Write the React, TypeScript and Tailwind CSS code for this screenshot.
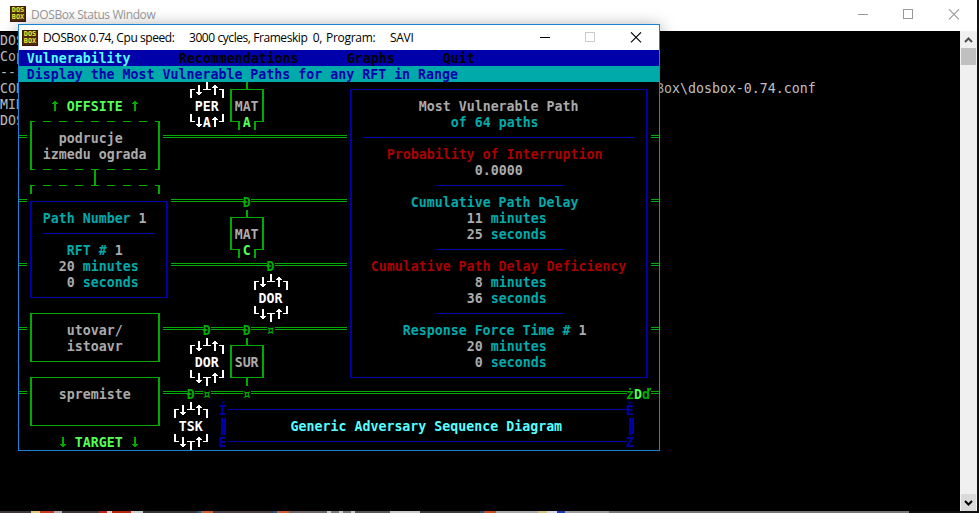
import React from "react";

const mono = "font-['DejaVu_Sans_Mono','Liberation_Mono',monospace]";
const cell = `${mono} text-[13.289px] leading-4 whitespace-pre`;

const GREEN = "#00aa00";
const BLUE = "#0000aa";

// The text screen has 8x16 cells; the diagram starts at text row 2.
const CW = 8;
const CH = 16;

function DosIcon() {
  return (
    <div className="flex h-4 w-4 shrink-0 flex-col items-center justify-center overflow-hidden border border-[#3a1c08] bg-[#4d2a10] font-['DejaVu_Sans_Mono',monospace] text-[6.8px] leading-[7px] font-bold text-[#ffe92e]">
      <span>DOS</span>
      <span>BOX</span>
    </div>
  );
}

function WindowButtons({ color, maxColor }: { color: string; maxColor: string }) {
  return (
    <svg width="102" height="11" viewBox="0 0 102 11" fill="none" className="shrink-0">
      <path d="M0 5.5H10" stroke={color} shapeRendering="crispEdges" />
      <rect x="45.5" y="0.5" width="9" height="9" stroke={maxColor} shapeRendering="crispEdges" />
      <path d="M91 0.3L101 10.3M101 0.3L91 10.3" stroke={color} strokeWidth="1.1" />
    </svg>
  );
}

function Rect({ x, y, w, h }: { x: number; y: number; w: number; h: number }) {
  return <rect x={x} y={y} width={w} height={h} />;
}

function Arrow({ c, r, up }: { c: number; r: number; up?: boolean }) {
  const x = 19 + c * CW;
  const y = 50 + r * CH + 3;
  return (
    <g>
      <Rect x={x + 3} y={y} w={2} h={10} />
      <Rect x={x + 2} y={up ? y + 1 : y + 8} w={4} h={1} />
      <Rect x={x + 1} y={up ? y + 2 : y + 7} w={6} h={1} />
    </g>
  );
}

function Gate({ c, r, letter }: { c: number; r: number; letter?: boolean }) {
  const x = 19 + c * CW;
  const y = 50 + r * CH;
  return (
    <g fill="#ffffff">
      <Rect x={x + 3} y={y + 7} w={5} h={1} />
      <Rect x={x + 3} y={y + 7} w={2} h={9} />
      <Arrow c={c + 1} r={r} />
      <Rect x={x + 16} y={y + 7} w={8} h={1} />
      <Rect x={x + 19} y={y} w={2} h={8} />
      <Arrow c={c + 3} r={r} up />
      <Rect x={x + 32} y={y + 7} w={5} h={1} />
      <Rect x={x + 35} y={y + 7} w={2} h={9} />
      <Rect x={x + 3} y={y + 39} w={5} h={1} />
      <Rect x={x + 3} y={y + 32} w={2} h={8} />
      <Arrow c={c + 1} r={r + 2} />
      {!letter && <Rect x={x + 16} y={y + 39} w={8} h={1} />}
      {!letter && <Rect x={x + 19} y={y + 39} w={2} h={9} />}
      <Arrow c={c + 3} r={r + 2} up />
      <Rect x={x + 32} y={y + 39} w={5} h={1} />
      <Rect x={x + 35} y={y + 32} w={2} h={8} />
    </g>
  );
}

function Block({ y, open }: { y: number; open?: boolean }) {
  return (
    <g>
      <Rect x={246} y={y} w={2} h={7} />
      <Rect x={230} y={y + 7} w={34} h={1} />
      <Rect x={230} y={y + 7} w={2} h={33} />
      <Rect x={262} y={y + 7} w={2} h={33} />
      {open ? (
        <>
          <Rect x={230} y={y + 39} w={10} h={1} />
          <Rect x={238} y={y + 39} w={2} h={9} />
          <Rect x={254} y={y + 39} w={10} h={1} />
          <Rect x={254} y={y + 39} w={2} h={9} />
        </>
      ) : (
        <>
          <Rect x={230} y={y + 39} w={34} h={1} />
          <Rect x={246} y={y + 39} w={2} h={9} />
        </>
      )}
    </g>
  );
}

// Double rules between the protection layers: [y, from, to]
const doubles = [
  [135, 19, 27], [135, 163, 347], [135, 651, 659],
  [199, 19, 27], [199, 171, 243], [199, 251, 347], [199, 651, 659],
  [263, 19, 27], [263, 171, 267], [263, 275, 347], [263, 651, 659],
  [327, 19, 27], [327, 163, 203], [327, 211, 243], [327, 251, 267], [327, 275, 347], [327, 651, 659],
  [391, 19, 27], [391, 163, 187], [391, 195, 203], [391, 211, 243], [391, 251, 627], [391, 651, 659],
];

function Wiring() {
  return (
    <svg className="absolute inset-0" width="640" height="368" viewBox="19 82 640 368" shapeRendering="crispEdges">
      <g fill={GREEN}>
        {doubles.map(([y, a, b]) => (
          <g key={`${y}-${a}`}>
            <Rect x={a} y={y} w={b - a} h={1} />
            <Rect x={a} y={y + 2} w={b - a} h={1} />
          </g>
        ))}
        <Block y={82} open />
        <Block y={210} open />
        <Block y={338} />
        {[121, 169, 185].map((y) => (
          <g key={y}>
            <Rect x={30} y={y} w={5} h={1} />
            {[43, 59, 75, 91, 107, 123, 139].map((x) => (
              <Rect key={x} x={x} y={y} w={8} h={1} />
            ))}
            <Rect x={155} y={y} w={5} h={1} />
          </g>
        ))}
        <Rect x={30} y={121} w={2} h={49} />
        <Rect x={158} y={121} w={2} h={49} />
        <Rect x={30} y={185} w={2} h={9} />
        <Rect x={158} y={185} w={2} h={9} />
        <Rect x={94} y={169} w={2} h={17} />
        <Arrow c={4} r={3} up />
        <Arrow c={14} r={3} up />
        <Arrow c={5} r={24} />
        <Arrow c={14} r={24} />
      </g>
      <Gate c={21} r={2} letter />
      <Gate c={29} r={14} />
      <Gate c={21} r={18} />
      <Gate c={19} r={22} />
      <g fill={BLUE}>
        <Rect x={227} y={409} w={400} h={1} />
        <Rect x={227} y={441} w={400} h={1} />
        <Rect x={221} y={418} w={2} h={16} />
        <Rect x={224} y={418} w={2} h={16} />
        <Rect x={629} y={418} w={2} h={16} />
        <Rect x={632} y={418} w={2} h={16} />
      </g>
    </svg>
  );
}

function Measure({ n, unit }: { n: string; unit: string }) {
  return (
    <div className="text-[#00aaaa]">
      <span className="text-[#aaaaaa]">{n.padStart(2)}</span> {unit}
    </div>
  );
}

function Rule({ className }: { className: string }) {
  return (
    <div className="flex h-4 pt-[6px]">
      <div className={`h-px bg-[#0000aa] ${className}`} />
    </div>
  );
}

function ResultPanel() {
  return (
    <div className="mt-[6px] h-[289px] w-[298px] shrink-0 border-x-2 border-y border-[#0000aa] pt-[9px]">
      <div className="pl-[67px] text-[#aaaaaa]">Most Vulnerable Path</div>
      <div className="pl-[99px] text-[#00aaaa]">of 64 paths</div>
      <Rule className="ml-[11px] w-[272px]" />
      <div className="pl-[35px] text-[#aa0000]">Probability of Interruption</div>
      <div className="pl-[123px] text-[#aaaaaa]">0.0000</div>
      <Rule className="ml-[83px] w-32" />
      <div className="pl-[59px] text-[#00aaaa]">Cumulative Path Delay</div>
      <div className="pl-[115px]">
        <Measure n="11" unit="minutes" />
        <Measure n="25" unit="seconds" />
      </div>
      <Rule className="ml-[83px] w-32" />
      <div className="pl-[19px] text-[#aa0000]">Cumulative Path Delay Deficiency</div>
      <div className="pl-[115px]">
        <Measure n="8" unit="minutes" />
        <Measure n="36" unit="seconds" />
      </div>
      <Rule className="ml-[83px] w-32" />
      <div className="pl-[51px] text-[#00aaaa]">
        Response Force Time # <span className="text-[#aaaaaa]">1</span>
      </div>
      <div className="pl-[115px]">
        <Measure n="20" unit="minutes" />
        <Measure n="0" unit="seconds" />
      </div>
    </div>
  );
}

function PathPanel() {
  return (
    <div className="h-[97px] w-[138px] shrink-0 border-x-2 border-y border-[#0000aa] pt-[9px] pl-[11px] text-[#00aaaa]">
      <div>
        Path Number <span className="text-[#aaaaaa]">1</span>
      </div>
      <Rule className="w-28" />
      <div className="pl-6">
        RFT # <span className="text-[#aaaaaa]">1</span>
      </div>
      <div className="pl-4">
        <Measure n="20" unit="minutes" />
        <Measure n="0" unit="seconds" />
      </div>
    </div>
  );
}

function AreaBox({ className, children }: { className: string; children: React.ReactNode }) {
  return (
    <div className={`h-[49px] w-[130px] shrink-0 border-x-2 border-y border-[#00aa00] pt-[9px] text-[#aaaaaa] ${className}`}>
      {children}
    </div>
  );
}

// A text row is a list of runs: blank cells before it, the text, its colour.
type Run = [number, string, string];

const green = "text-[#00aa00]";
const lime = "text-[#55ff55]";
const gray = "text-[#aaaaaa]";
const blue = "text-[#0000aa]";
const white = "text-white";
const aqua = "text-[#55ffff]";

const layerRows: Run[][] = [
  [],
  [[3, "PER", white], [2, "MAT", gray]],
  [[4, "A", white], [4, "A", lime]],
  [],
  [],
  [],
  [],
  [[9, "Đ", green]],
  [],
  [[8, "MAT", gray]],
  [[9, "C", lime]],
  [[12, "Đ", green]],
  [],
  [[11, "DOR", white]],
  [],
  [[4, "Đ", green], [4, "Đ", green], [2, "¤", green]],
  [],
  [[3, "DOR", white], [2, "SUR", gray]],
  [],
];

const footerRows: Run[][] = [
  [[2, "Đ", green], [1, "¤", green], [4, "¤", green], [47, "ż", green], [0, "D", lime], [0, "ď", green]],
  [[6, "Í", blue], [50, "Ě", blue]],
  [[1, "TSK", white], [11, "Generic Adversary Sequence Diagram", aqua]],
  [[6, "Ë", blue], [50, "Ż", blue]],
];

function TextRows({ rows }: { rows: Run[][] }) {
  return (
    <>
      {rows.map((runs, i) => (
        <div key={i} className="h-4">
          {runs.map(([gap, text, color], j) => (
            <span key={j} className={color}>
              {" ".repeat(gap) + text}
            </span>
          ))}
        </div>
      ))}
    </>
  );
}

function Diagram() {
  return (
    <div className="relative flex h-[368px] overflow-hidden bg-black font-bold">
      <Wiring />
      <div className="flex w-[152px] shrink-0 flex-col pl-[11px]">
        <div className="h-[119px] shrink-0 pt-[17px]">
          <div className="pl-[37px] text-[#55ff55]">OFFSITE</div>
          <div className="pt-4 pl-[29px] text-[#aaaaaa]">podrucje</div>
          <div className="pl-[13px] text-[#aaaaaa]">izmedu ograda</div>
        </div>
        <PathPanel />
        <AreaBox className="mt-[15px] pl-[35px]">
          <div>utovar/</div>
          <div>istoavr</div>
        </AreaBox>
        <AreaBox className="mt-[15px] pl-[27px]">spremiste</AreaBox>
        <div className="mt-[9px] pl-[45px] text-[#55ff55]">TARGET</div>
      </div>
      <div className="flex flex-1 flex-col pt-px">
        <div className="flex h-[304px] shrink-0">
          <div className="w-[179px] shrink-0">
            <TextRows rows={layerRows} />
          </div>
          <ResultPanel />
        </div>
        <TextRows rows={footerRows} />
      </div>
    </div>
  );
}

function DosWindow() {
  return (
    <div className="absolute top-6 left-[18px] flex h-[427px] w-[642px] flex-col border border-[#1883d7] bg-white shadow-[0_3px_16px_rgba(0,0,0,0.4)]">
      <div className="flex h-[25px] shrink-0 items-center pr-[17px] pl-[3px]">
        <DosIcon />
        <div className="ml-[5px] flex flex-1 font-['Open_Sans','Noto_Sans',sans-serif] text-[12px] leading-4 tracking-[-0.43px] whitespace-pre text-black">
          <span className="w-[146px] shrink-0">DOSBox 0.74, Cpu speed:</span>
          <span className="w-[137px] shrink-0">3000 cycles, Frameskip  0,</span>
          <span className="w-[64px] shrink-0 tracking-[-0.3px]">Program:</span>
          <span className="tracking-[-0.3px]">SAVI</span>
        </div>
        <WindowButtons color="#000000" maxColor="#cccccc" />
      </div>
      <div className={`${cell} h-[400px] overflow-hidden indent-[-0.25px]`}>
        <div className="flex h-4 bg-[#0000aa] pl-2 leading-[18px] font-bold text-black">
          <span className="w-[152px] text-[#55ffff]">Vulnerability</span>
          <span className="w-[168px]">Recommendations</span>
          <span className="w-24">Graphs</span>
          <span>Quit</span>
        </div>
        <div className="h-4 bg-[#00aaaa] pl-2 leading-[18px] font-bold text-[#0000aa]">
          Display the Most Vulnerable Paths for any RFT in Range
        </div>
        <Diagram />
      </div>
    </div>
  );
}

function Scrollbar() {
  return (
    <div className="flex w-[17px] shrink-0 flex-col items-center bg-[#f0f0f0]">
      <div className="flex h-[17px] items-center justify-center">
        <svg width="9" height="6" viewBox="0 0 9 6" fill="none">
          <path d="M1 5L4.5 1.5L8 5" stroke="#505050" strokeWidth="2" />
        </svg>
      </div>
      <div className="h-[17px] w-[15px] bg-[#c0c0c0]" />
      <div className="flex-1" />
      <div className="flex h-[17px] w-[15px] items-center justify-center bg-[#dadada]">
        <svg width="9" height="6" viewBox="0 0 9 6" fill="none">
          <path d="M1 1L4.5 4.5L8 1" stroke="#000000" strokeWidth="2" />
        </svg>
      </div>
    </div>
  );
}

// Sliver of the desktop visible under the status window: colour and width.
const strip: [string, number][] = [
  ["#3c3638", 31], ["#d8c87c", 9], ["#c43a24", 14], ["#b0aaa8", 8], ["#3c3638", 37], ["#c02410", 8],
  ["#d8d0d0", 5], ["#b82410", 19], ["#cccccc", 12], ["#38343a", 54], ["#28587c", 4], ["#c86030", 12],
  ["#484044", 60], ["#28587c", 4], ["#c86030", 12], ["#6c6668", 38], ["#c8c8c8", 4], ["#777777", 8],
  ["#c8c8c8", 4], ["#777777", 8], ["#c8c8c8", 4], ["#555555", 35], ["#c8c8c8", 30], ["#3c383c", 60],
  ["#28587c", 4], ["#c05028", 12], ["#a8a8a8", 42], ["#d4c080", 9], ["#d8d8e8", 10],
  ["#1c3cb4", 8], ["#9c9c9c", 44], ["#787474", 300], ["#101010", 70],
];

export default function App() {
  return (
    <div className="relative flex h-[513px] w-[979px] flex-col overflow-hidden bg-[#111111]">
      <div className="flex h-[31px] w-[977px] shrink-0 items-center bg-white pr-[17px] pb-[3px] pl-[10px]">
        <DosIcon />
        <span className="ml-[5px] flex-1 pt-[2px] font-['Open_Sans','Noto_Sans',sans-serif] text-[12px] leading-4 tracking-[-0.4px] text-[#999999]">
          DOSBox Status Window
        </span>
        <WindowButtons color="#999999" maxColor="#999999" />
      </div>
      <div className="flex h-[480px] w-[977px] shrink-0">
        <div className={`${cell} flex-1 overflow-hidden bg-black pt-[2px] text-[#c0c0c0]`}>
          <div>DOS</div>
          <div>Cop</div>
          <div>---</div>
          <div className="flex">
            <span className="w-[656px]">CON</span>
            <span>Box\dosbox-0.74.conf</span>
          </div>
          <div>MID</div>
          <div>DOS</div>
        </div>
        <Scrollbar />
      </div>
      <div className="flex h-[2px] w-full">
        {strip.map(([color, width], i) => (
          <div key={i} className="h-full shrink-0" style={{ width, background: color }} />
        ))}
      </div>
      <DosWindow />
    </div>
  );
}
